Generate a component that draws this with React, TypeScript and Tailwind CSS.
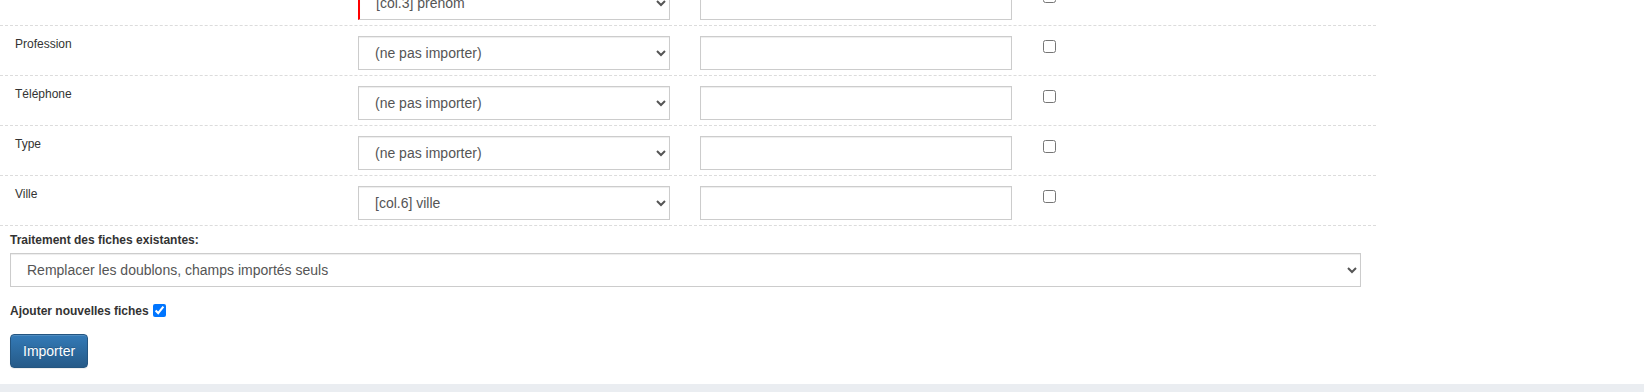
import React from "react";

type Row = { label: string; value: string; flagged?: boolean };

const rows: Row[] = [
  { label: "Prénom", value: "[col.3] prénom", flagged: true },
  { label: "Profession", value: "(ne pas importer)" },
  { label: "Téléphone", value: "(ne pas importer)" },
  { label: "Type", value: "(ne pas importer)" },
  { label: "Ville", value: "[col.6] ville" },
];

function MappingRow({ row }: { row: Row }) {
  return (
    <div className="flex items-start h-[50px] pt-[10px] border-b border-dashed border-[#dcdcdc]">
      <div className="w-[358px] pl-[15px] text-[12px] leading-[17px] text-[#333]">{row.label}</div>
      <select
        defaultValue={row.value}
        className={
          "w-[312px] h-[34px] border border-[#ccc] bg-white px-[12px] text-[14px] text-[#555] shadow-[inset_0_1px_1px_rgba(0,0,0,0.075)] " +
          (row.flagged ? "border-l-2 border-l-[#ff0000]" : "")
        }
      >
        <option value={row.value}>{row.value}</option>
      </select>
      <input
        type="text"
        className="ml-[30px] w-[312px] h-[34px] border border-[#ccc] bg-white px-[12px] text-[14px] text-[#555] shadow-[inset_0_1px_1px_rgba(0,0,0,0.075)]"
      />
      <input type="checkbox" className="ml-[31px] mt-[4px] w-[13px] h-[13px]" />
    </div>
  );
}

export default function App() {
  return (
    <div className="flex flex-col w-full h-[392px] overflow-hidden bg-white font-['Liberation_Sans',Arial,sans-serif] text-[#333]">
      <div className="mt-[-24px] w-[1376px]">
        {rows.map((r) => (
          <MappingRow key={r.label} row={r} />
        ))}
      </div>
      <div className="pl-[10px]">
        <div className="mt-[6px] mb-[4px] text-[12px] leading-[17px] font-bold">
          Traitement des fiches existantes:
        </div>
        <select
          defaultValue="a"
          className="w-[1351px] h-[34px] border border-[#ccc] bg-white px-[12px] text-[14px] text-[#555] shadow-[inset_0_1px_1px_rgba(0,0,0,0.075)]"
        >
          <option value="a">Remplacer les doublons, champs importés seuls</option>
        </select>
        <div className="mt-[16px] flex items-start">
          <span className="text-[12px] leading-[17px] font-bold">Ajouter nouvelles fiches</span>
          <input type="checkbox" defaultChecked className="ml-[4px] mt-[1px] w-[13px] h-[13px]" />
        </div>
        <button
          type="button"
          className="mt-[14px] h-[34px] px-[12px] text-[14px] leading-[20px] text-white rounded-[4px] border border-[#245580] bg-[linear-gradient(to_bottom,#337ab7,#265a88)] shadow-[inset_0_1px_0_rgba(255,255,255,0.15),0_1px_1px_rgba(0,0,0,0.075)] [text-shadow:0_-1px_0_rgba(0,0,0,0.2)]"
        >
          Importer
        </button>
      </div>
      <div className="mt-auto h-[8px] bg-[#eaedf1]" />
    </div>
  );
}
